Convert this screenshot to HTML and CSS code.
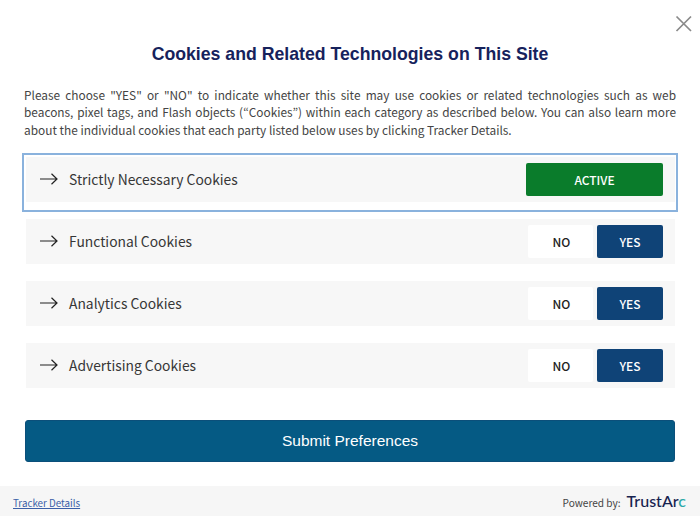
FILE: index.html
```html
<!DOCTYPE html>
<html lang="en">
<head>
<meta charset="utf-8">
<title>Cookies and Related Technologies on This Site</title>
<link rel="stylesheet" href="styles.css">
</head>
<body>
<main class="dialog">
  <button class="close" aria-label="Close">
    <svg width="18" height="18" viewBox="0 0 18 18"><path d="M1.5 1.5L16 16M16 1.5L1.5 16" fill="none" stroke="#8a8a8a" stroke-width="1.7"/></svg>
  </button>
  <h1 class="title">Cookies and Related Technologies on This Site</h1>
  <p class="intro">Please choose "YES" or "NO" to indicate whether this site may use cookies or related technologies such as web beacons, pixel tags, and Flash objects (“Cookies”) within each category as described below. You can also learn more about the individual cookies that each party listed below uses by clicking Tracker Details.</p>
  <section class="cats">
    <div class="cat cat-focus">
      <div class="row">
        <svg class="arrow" width="18" height="12" viewBox="0 0 18 12"><path d="M0 6H17M11.5 .8L17 6L11.5 11.2" fill="none" stroke="#222" stroke-width="1.2"/></svg>
        <span class="name">Strictly Necessary Cookies</span>
        <div class="active">ACTIVE</div>
      </div>
    </div>
    <div class="cat">
      <div class="row">
        <svg class="arrow" width="18" height="12" viewBox="0 0 18 12"><path d="M0 6H17M11.5 .8L17 6L11.5 11.2" fill="none" stroke="#222" stroke-width="1.2"/></svg>
        <span class="name">Functional Cookies</span>
        <div class="toggle"><span class="no">NO</span><span class="yes">YES</span></div>
      </div>
    </div>
    <div class="cat">
      <div class="row">
        <svg class="arrow" width="18" height="12" viewBox="0 0 18 12"><path d="M0 6H17M11.5 .8L17 6L11.5 11.2" fill="none" stroke="#222" stroke-width="1.2"/></svg>
        <span class="name">Analytics Cookies</span>
        <div class="toggle"><span class="no">NO</span><span class="yes">YES</span></div>
      </div>
    </div>
    <div class="cat">
      <div class="row">
        <svg class="arrow" width="18" height="12" viewBox="0 0 18 12"><path d="M0 6H17M11.5 .8L17 6L11.5 11.2" fill="none" stroke="#222" stroke-width="1.2"/></svg>
        <span class="name">Advertising Cookies</span>
        <div class="toggle"><span class="no">NO</span><span class="yes">YES</span></div>
      </div>
    </div>
  </section>
  <button class="submit">Submit Preferences</button>
</main>
<footer class="footer">
  <a class="link" href="#">Tracker Details</a>
  <div class="powered"><span>Powered by:</span><span class="logo">TrustAr<span class="logo-c">c</span></span></div>
</footer>
</body>
</html>
```
FILE: styles.css
```css
* { box-sizing: border-box; }
html, body { margin: 0; padding: 0; }
body {
  width: 700px;
  height: 516px;
  background: #fff;
  font-family: "Noto Sans CJK JP", "Noto Sans", sans-serif;
  color: #333;
  display: flex;
  flex-direction: column;
  overflow: hidden;
}
.dialog {
  position: relative;
  height: 486px;
  padding: 44px 24px 0;
  display: flex;
  flex-direction: column;
}
.close {
  position: absolute;
  top: 15px;
  right: 7px;
  width: 18px;
  height: 18px;
  padding: 0;
  border: 0;
  background: none;
  display: flex;
}
.title {
  margin: 0;
  height: 21px;
  font: bold 17.7px/21px "Liberation Sans", Arial, sans-serif;
  color: #16225c;
  text-align: center;
}
.intro {
  margin: 21px 0 0;
  font-size: 11.87px;
  line-height: 17.3px;
  color: #444;
  text-align: justify;
}
.cats {
  margin: 15px -2px 0;
  display: flex;
  flex-direction: column;
  gap: 3px;
}
.cat {
  border: 2px solid transparent;
  padding: 2px 1px 8px 2px;
}
.cat-focus { border-color: #8ab2dd; }
.row {
  height: 45px;
  background: #f7f7f7;
  display: flex;
  align-items: center;
  padding: 0 12px 0 14px;
}
.arrow { flex: none; }
.name {
  margin-left: 11px;
  font-size: 13.85px;
  color: #363636;
  flex: 1;
}
.active {
  width: 137px;
  height: 33px;
  border-radius: 2px;
  background: #0a7c2b;
  color: #fff;
  font-size: 12px;
  font-weight: 500;
  display: flex;
  align-items: center;
  justify-content: center;
}
.toggle { display: flex; gap: 4px; height: 33px; }
.no, .yes {
  display: flex;
  align-items: center;
  justify-content: center;
  font-size: 12px;
  font-weight: 500;
  border-radius: 2px;
}
.no { width: 65px; padding-left: 2px; background: #fff; color: #222; }
.yes { width: 66px; background: #0f4377; color: #fff; }
.submit {
  margin: 22px 1px 0;
  height: 42px;
  border: 1px solid #0b4f7a;
  border-radius: 3px;
  background: #055a84;
  color: #fff;
  font: 15.5px "Liberation Sans", Arial, sans-serif;
}
.footer {
  height: 30px;
  background: #f6f6f6;
  display: flex;
  align-items: center;
  justify-content: space-between;
  padding: 3px 14px 0 13px;
}
.link { font-size: 9.8px; color: #3b5fa8; }
.powered { display: flex; align-items: center; gap: 6px; font-size: 10.1px; color: #444; }
.logo {
  margin-top: -3px;
  font: 500 16px/20px Lato, sans-serif;
  color: #16224f;
}
.logo-c { color: #2ba8a8; }
```
